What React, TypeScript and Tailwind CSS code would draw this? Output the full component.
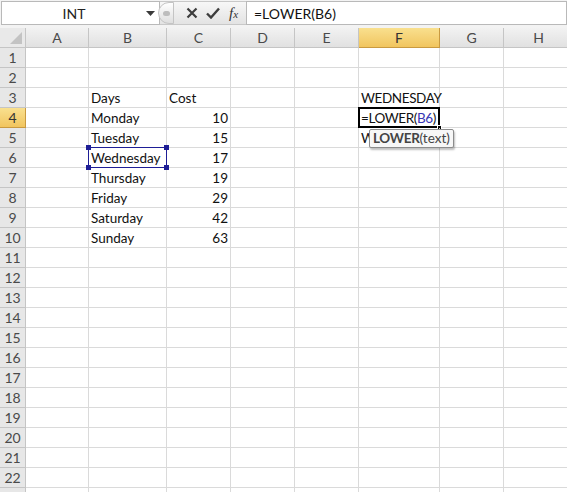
import React from "react";

const COLS = ["A", "B", "C", "D", "E", "F", "G", "H"];
const WIDTHS = [63, 78, 64, 64, 64, 81, 64, 70];
const ROWS = 23;

type Cell = { text?: React.ReactNode; align?: "right"; caps?: boolean };

const data: Record<string, Cell> = {
  B3: { text: "Days" },
  C3: { text: "Cost" },
  F3: { text: "WEDNESDAY", caps: true },
  B4: { text: "Monday" },
  C4: { text: "10", align: "right" },
  B5: { text: "Tuesday" },
  C5: { text: "15", align: "right" },
  F5: { text: "WEDNESDAY", caps: true },
  B6: { text: "Wednesday" },
  C6: { text: "17", align: "right" },
  B7: { text: "Thursday" },
  C7: { text: "19", align: "right" },
  B8: { text: "Friday" },
  C8: { text: "29", align: "right" },
  B9: { text: "Saturday" },
  C9: { text: "42", align: "right" },
  B10: { text: "Sunday" },
  C10: { text: "63", align: "right" },
};

const font = { fontFamily: "Lato, 'Open Sans', sans-serif" };

function FormulaBar() {
  return (
    <div className="flex h-[28px] items-start bg-[#f3f3f3] pt-[1px]">
      <div className="ml-[1px] flex h-[24px] w-[159px] items-center border border-[#b9b9b9] bg-white">
        <span className="flex-1 text-center text-[14px] text-[#222]">INT</span>
        <svg width="9" height="5" viewBox="0 0 9 5" className="mr-[4px]">
          <path d="M0 0h9L4.5 5z" fill="#3a3a3a" />
        </svg>
      </div>
      <div className="flex h-[24px] w-[86px] items-center border-y border-[#c8c8c8] bg-gradient-to-b from-[#f7f7f7] to-[#e3e3e3]">
        <div className="-ml-[2px] flex h-[22px] w-[16px] items-center justify-center rounded-l-full border border-[#c4c4c4] bg-gradient-to-b from-[#ffffff] to-[#dedede]">
          <div className="h-[5px] w-[7px] rounded-full bg-[#bdbdbd]" />
        </div>
        <svg width="12" height="12" viewBox="0 0 12 12" className="ml-[12px]">
          <path d="M1.5 1.5l9 9M10.5 1.5l-9 9" stroke="#3d3d3d" strokeWidth="2.2" />
        </svg>
        <svg width="14" height="12" viewBox="0 0 14 12" className="ml-[8px]">
          <path d="M1 6.5l4 4L13 1.5" stroke="#3d3d3d" strokeWidth="2.4" fill="none" />
        </svg>
        <span
          className="ml-[9px] text-[15px] italic text-[#333]"
          style={{ fontFamily: "'Liberation Serif', serif" }}
        >
          f<span className="text-[11px]">x</span>
        </span>
      </div>
      <div className="flex h-[24px] flex-1 items-center border border-[#b9b9b9] bg-white pl-[7px] text-[14px] text-[#111]">
        =LOWER(B6)
      </div>
    </div>
  );
}

function ColHeader({ name, active }: { name: string; active: boolean }) {
  return (
    <div
      className={
        active
          ? "flex h-[20px] items-center justify-center border-r border-b border-[#c99a40] bg-gradient-to-b from-[#f9e08e] to-[#f1c55e] text-[14px] text-[#333]"
          : "flex h-[20px] items-center justify-center border-r border-b border-[#c5c5c5] bg-gradient-to-b from-[#f2f2f2] to-[#e1e1e1] text-[14px] text-[#4a4a4a]"
      }
    >
      {name}
    </div>
  );
}

function RowHeader({ n, active }: { n: number; active: boolean }) {
  return (
    <div
      className={
        active
          ? "flex h-[20px] items-center justify-center border-r border-b border-[#c99a40] bg-gradient-to-b from-[#f9e08e] to-[#f1c55e] text-[14px] text-[#333]"
          : "flex h-[20px] items-center justify-center border-r border-b border-[#c5c5c5] bg-[#e7e7e7] text-[14px] text-[#4a4a4a]"
      }
    >
      {n}
    </div>
  );
}

function Handle({ pos }: { pos: string }) {
  return <div className={`absolute h-[5px] w-[5px] bg-[#1e1e96] ${pos}`} />;
}

function GridCell({ id }: { id: string }) {
  const cell = data[id];
  const isF4 = id === "F4";
  const isB6 = id === "B6";
  const isF5 = id === "F5";
  return (
    <div
      className={`relative h-[20px] border-r border-b border-[#dadada] ${
        isF4 || isB6 ? "z-10" : ""
      } ${isF5 ? "z-20" : ""}`}
    >
      {cell?.text && (
        <div
          className={`absolute inset-0 whitespace-nowrap px-[2px] text-[13.5px] leading-[20px] text-[#111] ${
            cell.align === "right" ? "text-right" : ""
          } ${cell.caps ? "tracking-[-0.4px]" : ""}`}
        >
          {cell.text}
        </div>
      )}
      {isF4 && (
        <>
          <div className="absolute -left-[1px] -top-[1px] -right-[1px] -bottom-[1px] border-2 border-black" />
          <div className="absolute left-[2px] top-0 whitespace-nowrap text-[13.5px] leading-[20px] tracking-[-0.4px] text-[#111]">
            =LOWER(<span className="text-[#3636b4]">B6</span>)
          </div>
          <div className="absolute -bottom-[3px] -right-[3px] h-[5px] w-[5px] border border-white bg-black" />
        </>
      )}
      {isB6 && (
        <>
          <div className="absolute -left-[1px] -top-[1px] -right-[1px] -bottom-[1px] border border-[#1e1e96]" />
          <Handle pos="-left-[3px] -top-[3px]" />
          <Handle pos="-right-[3px] -top-[3px]" />
          <Handle pos="-left-[3px] -bottom-[3px]" />
          <Handle pos="-right-[3px] -bottom-[3px]" />
        </>
      )}
      {isF5 && (
        <div className="absolute left-[10px] top-[1px] z-30 flex h-[19px] items-center whitespace-nowrap rounded-[2px] border border-[#8c8c8c] bg-[#f7f7f7] px-[3px] text-[13.5px] leading-none text-[#444] shadow-[1px_2px_2px_rgba(0,0,0,0.25)]">
          <span className="font-bold tracking-[-0.3px]">LOWER</span>
          <span>(text)</span>
        </div>
      )}
    </div>
  );
}

export default function App() {
  return (
    <div className="h-[492px] w-[567px] overflow-hidden bg-white" style={font}>
      <FormulaBar />
      <div
        className="grid"
        style={{ gridTemplateColumns: `26px ${WIDTHS.map((w) => `${w}px`).join(" ")}` }}
      >
        <div className="relative h-[20px] border-r border-b border-[#c5c5c5] bg-[#e9e9e9]">
          <svg width="12" height="12" viewBox="0 0 12 12" className="absolute bottom-[3px] right-[3px]">
            <path d="M12 0V12H0z" fill="#c3c3c3" />
          </svg>
        </div>
        {COLS.map((c) => (
          <ColHeader key={c} name={c} active={c === "F"} />
        ))}
        {Array.from({ length: ROWS }, (_, i) => i + 1).map((r) => (
          <React.Fragment key={r}>
            <RowHeader n={r} active={r === 4} />
            {COLS.map((c) => (
              <GridCell key={c + r} id={c + r} />
            ))}
          </React.Fragment>
        ))}
      </div>
    </div>
  );
}
